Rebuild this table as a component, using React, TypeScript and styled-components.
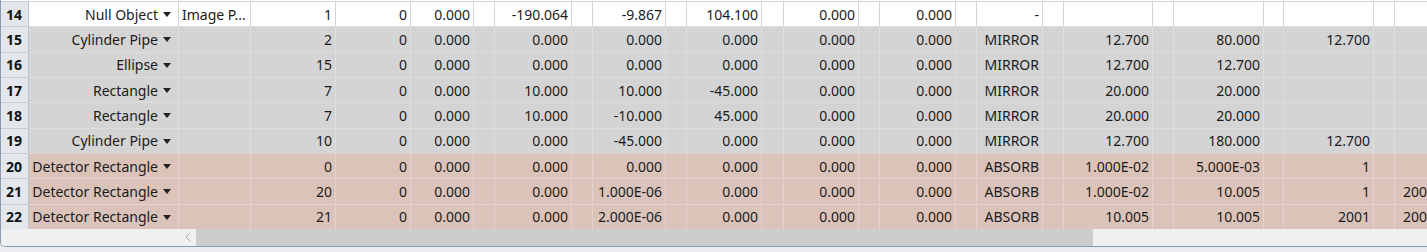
import React from "react";
import styled, { createGlobalStyle } from "styled-components";

type Variant = "plain" | "mirror" | "detector";
type Align = "left" | "right";

interface Column {
  width: number;
  align: Align;
  solve?: boolean;
}

// value columns, each numeric one is followed by its narrow solve cell
const VALUE_COLUMNS: Column[] = [
  { width: 150, align: "right" }, // Object Type
  { width: 72, align: "left" }, // Comment
  { width: 85, align: "right" }, // Ref Object
  { width: 75, align: "right" }, // Inside Of
  { width: 63, align: "right" }, // X Position
  { width: 77, align: "right" }, // Y Position
  { width: 73, align: "right" }, // Z Position
  { width: 75, align: "right" }, // Tilt About X
  { width: 75, align: "right" }, // Tilt About Y
  { width: 76, align: "right" }, // Tilt About Z
  { width: 66, align: "right" }, // Material
  { width: 89, align: "right" }, // Par 1
  { width: 90, align: "right" }, // Par 2
  { width: 90, align: "right" }, // Par 3
  { width: 44, align: "right" }, // Par 4
];

const SOLVE_WIDTHS = [21, 21, 21, 22, 21, 21, 21, 21, 20, 21];

const COLUMNS: Column[] = (() => {
  const list: Column[] = VALUE_COLUMNS.slice(0, 4);
  VALUE_COLUMNS.slice(4).forEach((col, i) => {
    list.push(col);
    if (i < SOLVE_WIDTHS.length) list.push({ width: SOLVE_WIDTHS[i], align: "right", solve: true });
  });
  return list;
})();

const TEMPLATE = ["28px", ...COLUMNS.map((c) => `${c.width}px`)].join(" ");

interface RowData {
  id: number;
  variant: Variant;
  values: string[];
}

const ROWS: RowData[] = [
  { id: 14, variant: "plain", values: ["Null Object", "Image P...", "1", "0", "0.000", "-190.064", "-9.867", "104.100", "0.000", "0.000", "-", "", "", "", ""] },
  { id: 15, variant: "mirror", values: ["Cylinder Pipe", "", "2", "0", "0.000", "0.000", "0.000", "0.000", "0.000", "0.000", "MIRROR", "12.700", "80.000", "12.700", ""] },
  { id: 16, variant: "mirror", values: ["Ellipse", "", "15", "0", "0.000", "0.000", "0.000", "0.000", "0.000", "0.000", "MIRROR", "12.700", "12.700", "", ""] },
  { id: 17, variant: "mirror", values: ["Rectangle", "", "7", "0", "0.000", "10.000", "10.000", "-45.000", "0.000", "0.000", "MIRROR", "20.000", "20.000", "", ""] },
  { id: 18, variant: "mirror", values: ["Rectangle", "", "7", "0", "0.000", "10.000", "-10.000", "45.000", "0.000", "0.000", "MIRROR", "20.000", "20.000", "", ""] },
  { id: 19, variant: "mirror", values: ["Cylinder Pipe", "", "10", "0", "0.000", "0.000", "-45.000", "0.000", "0.000", "0.000", "MIRROR", "12.700", "180.000", "12.700", ""] },
  { id: 20, variant: "detector", values: ["Detector Rectangle", "", "0", "0", "0.000", "0.000", "0.000", "0.000", "0.000", "0.000", "ABSORB", "1.000E-02", "5.000E-03", "1", ""] },
  { id: 21, variant: "detector", values: ["Detector Rectangle", "", "20", "0", "0.000", "0.000", "1.000E-06", "0.000", "0.000", "0.000", "ABSORB", "1.000E-02", "10.005", "1", "2001"] },
  { id: 22, variant: "detector", values: ["Detector Rectangle", "", "21", "0", "0.000", "0.000", "2.000E-06", "0.000", "0.000", "0.000", "ABSORB", "10.005", "10.005", "2001", "2001"] },
];

const ROW_COLORS: Record<Variant, { bg: string; line: string }> = {
  plain: { bg: "#ffffff", line: "#d4d4d4" },
  mirror: { bg: "#d4d4d4", line: "#dedede" },
  detector: { bg: "#dcc3ba", line: "#e4d2cc" },
};

const GlobalStyle = createGlobalStyle`
  html, body {
    margin: 0;
    padding: 0;
    background: #eaecef;
    overflow: hidden;
  }
  body {
    font-family: "Noto Sans", "Segoe UI", sans-serif;
    color: #1b1b1b;
  }
`;

const App = () => {
  return (
    <>
      <GlobalStyle />
      <Frame>
        <Table>
          {ROWS.map((row) => {
            let v = 0;
            return (
              <Row key={row.id} $variant={row.variant}>
                <RowHeader>{row.id}</RowHeader>
                {COLUMNS.map((col, ci) => {
                  if (col.solve) return <Cell key={ci} $variant={row.variant} $align="right" />;
                  const value = row.values[v++];
                  if (ci === 0) {
                    return (
                      <TypeCell key={ci} $variant={row.variant}>
                        <span>{value}</span>
                        <DropArrow />
                      </TypeCell>
                    );
                  }
                  return (
                    <Cell key={ci} $variant={row.variant} $align={col.align}>
                      {value}
                    </Cell>
                  );
                })}
              </Row>
            );
          })}
        </Table>
        <ScrollBar>
          <ScrollStart>
            <svg width="6" height="10" viewBox="0 0 6 10">
              <path d="M5 1 L1 5 L5 9" fill="none" stroke="#a3a3a3" strokeWidth="1" />
            </svg>
          </ScrollStart>
          <ScrollThumb />
          <ScrollTrack />
        </ScrollBar>
      </Frame>
    </>
  );
};

export default App;

const Frame = styled.div`
  width: 100vw;
  height: 247px;
  box-sizing: border-box;
  background: #ffffff;
  border-left: 1px solid #8a9ab0;
  border-bottom: 1px solid #8a9ab0;
  border-bottom-left-radius: 5px;
  overflow: hidden;
  display: flex;
  flex-direction: column;
`;

const Table = styled.div`
  padding-top: 1px;
  display: flex;
  flex-direction: column;
`;

const Row = styled.div<{ $variant: Variant }>`
  display: grid;
  grid-template-columns: ${TEMPLATE};
  height: 25.33px;
  box-sizing: border-box;
  border-top: 1px solid ${(p) => ROW_COLORS[p.$variant].line};
  background: ${(p) => ROW_COLORS[p.$variant].bg};
  font-size: 14px;
`;

const RowHeader = styled.div`
  margin-top: -1px;
  border-top: 1px solid #c7ccd2;
  background: #e3e6ea;
  border-right: 1px solid #bfc5cc;
  font-weight: 700;
  font-size: 14px;
  padding-left: 5px;
  display: flex;
  align-items: center;
  color: #111;
`;

const Cell = styled.div<{ $variant: Variant; $align: Align }>`
  border-right: 1px solid ${(p) => ROW_COLORS[p.$variant].line};
  display: flex;
  align-items: center;
  justify-content: ${(p) => (p.$align === "right" ? "flex-end" : "flex-start")};
  padding: 0 ${(p) => (p.$align === "right" ? "3px" : "0")} 0 ${(p) => (p.$align === "left" ? "3px" : "0")};
  white-space: nowrap;
  overflow: hidden;
  min-width: 0;
`;

const TypeCell = styled.div<{ $variant: Variant }>`
  border-right: 1px solid ${(p) => ROW_COLORS[p.$variant].line};
  display: flex;
  align-items: center;
  justify-content: flex-end;
  gap: 5px;
  padding-right: 7px;
  white-space: nowrap;
  overflow: hidden;
`;

const DropArrow = styled.span`
  width: 0;
  height: 0;
  border-left: 4px solid transparent;
  border-right: 4px solid transparent;
  border-top: 5px solid #222;
  margin-top: 1px;
`;

const ScrollBar = styled.div`
  height: 17px;
  display: flex;
  background: #f0f0f0;
`;

const ScrollStart = styled.div`
  width: 195px;
  display: flex;
  align-items: center;
  justify-content: flex-end;
  padding-right: 5px;
  box-sizing: border-box;
`;

const ScrollThumb = styled.div`
  width: 897px;
  background: #cdcdcd;
`;

const ScrollTrack = styled.div`
  flex: 1;
`;
